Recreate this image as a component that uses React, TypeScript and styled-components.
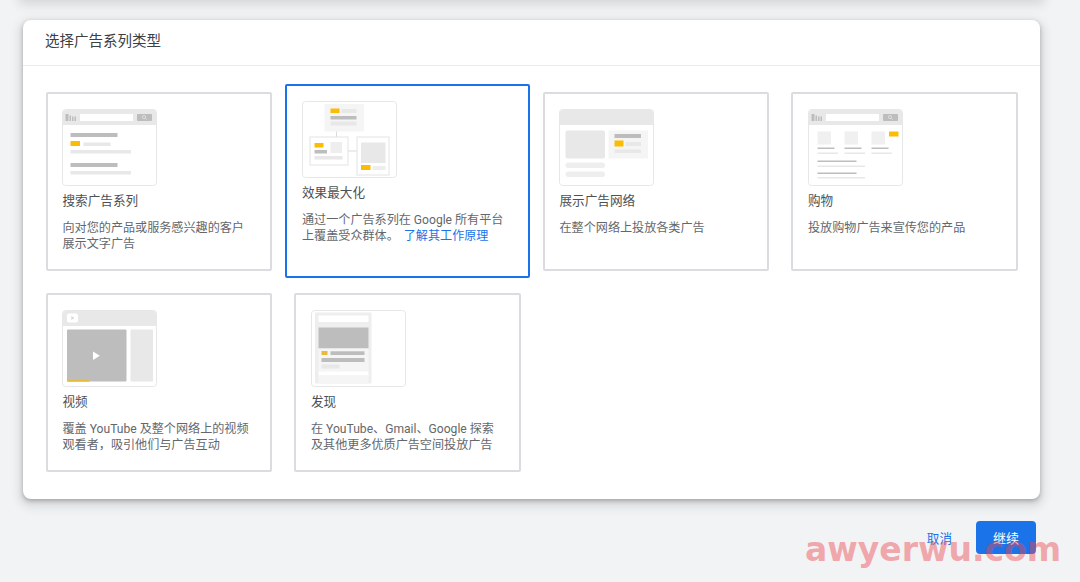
import React from 'react'
import styled, { createGlobalStyle } from 'styled-components'

const GlobalStyle = createGlobalStyle`
  html, body {
    margin: 0;
    height: 100%;
    overflow: hidden;
    background: #f1f3f4;
  }
  body {
    font-family: Roboto, 'Noto Sans CJK SC', sans-serif;
    color: #3c4043;
  }
`

const Page = styled.div`
  position: relative;
  height: 582px;
  padding: 20px 40px 0 23px;
  overflow: hidden;
`

// bottom edge of the panel above, only its shadow is in view
const PrevPanel = styled.div`
  position: absolute;
  top: -44px;
  left: 23px;
  right: 40px;
  height: 40px;
  background: #fff;
  box-shadow: 0 4px 10px 4px rgba(60, 64, 67, 0.16);
`

const Panel = styled.section`
  background: #fff;
  border-radius: 8px;
  box-shadow: 0 2px 4px rgba(60, 64, 67, 0.35), 0 4px 10px 4px rgba(60, 64, 67, 0.13);
`

const PanelHeader = styled.h1`
  margin: 0;
  height: 46px;
  padding: 0 22px 6px;
  box-sizing: border-box;
  display: flex;
  align-items: center;
  font-size: 14.5px;
  font-weight: 400;
  color: #3c4043;
  border-bottom: 1px solid #e8eaed;
`

const CardGrid = styled.div`
  display: grid;
  grid-template-columns: repeat(4, 1fr);
  grid-auto-rows: 179px;
  gap: 22px;
  padding: 26px 22.5px 27px;
`

const Card = styled.div<{ $selected?: boolean }>`
  padding: 15px;
  border: 2px solid ${p => (p.$selected ? '#1a73e8' : '#dadce0')};
  border-radius: 2px;
  background: #fff;
  margin: ${p => (p.$selected ? '-8px -9px -7px' : '0')};
`

const Thumb = styled.svg`
  display: block;
  width: 95px;
  height: 77px;
  margin-left: -0.5px;
`

const CardTitle = styled.div`
  margin-top: 5px;
  font-size: 12.6px;
  line-height: 20px;
  color: #4d5155;
`

const CardText = styled.div`
  margin-top: 9px;
  font-size: 12.1px;
  line-height: 16px;
  color: #63676c;
  white-space: nowrap;
`

const LearnMore = styled.a`
  margin-left: 5px;
  color: #1a73e8;
  text-decoration: none;
`

const Footer = styled.div`
  display: flex;
  justify-content: flex-end;
  align-items: center;
  gap: 24px;
  margin-top: 22px;
  padding-right: 4px;
`

const CancelLink = styled.a`
  font-size: 12.6px;
  color: #1a73e8;
`

const ContinueButton = styled.button`
  width: 60px;
  height: 33px;
  border: 0;
  border-radius: 4px;
  background: #1a73e8;
  color: #fff;
  font-family: inherit;
  font-size: 13px;
`

const Watermark = styled.div`
  position: absolute;
  left: 805px;
  top: 531px;
  font-family: 'DejaVu Sans', sans-serif;
  font-weight: 700;
  font-size: 33px;
  line-height: 38px;
  color: rgba(238, 70, 80, 0.46);
  white-space: nowrap;
  pointer-events: none;
`

const BG = '#e8e8e8'
const LIGHT = '#eeeeee'
const PALE = '#f5f5f5'
const DARK = '#bdbdbd'
const YELLOW = '#fbbc04'

const Bar: React.FC<{ x: number; y: number; x2: number; y2: number; fill: string; r?: number }> = ({
  x,
  y,
  x2,
  y2,
  fill,
  r,
}) => <rect x={x} y={y} width={x2 - x} height={y2 - y} fill={fill} rx={r} />

const Frame: React.FC<{ children: React.ReactNode; label: string }> = ({ children, label }) => (
  <Thumb viewBox='0 0 95 77' role='img' aria-label={label}>
    <rect x='0.5' y='0.5' width='94' height='76' rx='3' fill='#fff' stroke='#e6e7e9' />
    {children}
  </Thumb>
)

const SearchBar: React.FC = () => (
  <>
    <path d='M1 16V3.5A2.5 2.5 0 0 1 3.5 1h88A2.5 2.5 0 0 1 94 3.5V16z' fill={BG} />
    <Bar x={3.5} y={5} x2={6.5} y2={12} fill={DARK} />
    <Bar x={7.5} y={6.5} x2={9} y2={12} fill={DARK} />
    <Bar x={10} y={7.5} x2={11.5} y2={12} fill={DARK} />
    <Bar x={12.5} y={7.5} x2={14} y2={12} fill={DARK} />
    <Bar x={18} y={5} x2={71} y2={12} fill='#fff' />
    <Bar x={75} y={5} x2={90} y2={12} fill={DARK} r={1} />
    <circle cx='82' cy='8' r='1.6' fill='none' stroke='#e8e8e8' strokeWidth='0.7' />
    <path d='M83.2 9.2l1.5 1.5' stroke='#e8e8e8' strokeWidth='0.7' />
  </>
)

const SearchThumb: React.FC = () => (
  <Frame label='搜索广告系列'>
    <SearchBar />
    <Bar x={8.5} y={24} x2={55.5} y2={28} fill={DARK} />
    <Bar x={8.5} y={32} x2={18} y2={37} fill={YELLOW} />
    <Bar x={21.5} y={33.5} x2={48.5} y2={37} fill={BG} />
    <Bar x={8.5} y={41} x2={69} y2={44.5} fill={BG} />
    <Bar x={8.5} y={54} x2={55.5} y2={58} fill={DARK} />
    <Bar x={8.5} y={62} x2={69} y2={65.5} fill={BG} />
  </Frame>
)

const MaxThumb: React.FC = () => (
  <Frame label='效果最大化'>
    <Bar x={22.5} y={3} x2={62} y2={30.5} fill={PALE} />
    <Bar x={28.5} y={7.5} x2={37.5} y2={12} fill={YELLOW} />
    <Bar x={39.5} y={8} x2={54.5} y2={12} fill={BG} />
    <Bar x={28.5} y={15} x2={54.5} y2={18.5} fill={DARK} />
    <Bar x={28.5} y={20.5} x2={54.5} y2={24.5} fill={BG} />
    <Bar x={34} y={30.5} x2={35} y2={36} fill='#dcdcdc' />
    <rect x='8' y='36' width='38' height='28' fill='#fff' stroke='#e4e4e4' />
    <Bar x={12.5} y={42} x2={21.5} y2={46.5} fill={YELLOW} />
    <Bar x={12.5} y={49} x2={25} y2={52.5} fill={DARK} />
    <Bar x={28.5} y={41} x2={40} y2={52} fill={LIGHT} />
    <Bar x={12.5} y={55} x2={40.5} y2={58.5} fill={BG} />
    <Bar x={46} y={49.5} x2={55} y2={50.5} fill='#dcdcdc' />
    <rect x='55' y='36' width='32' height='38' fill='#fff' stroke='#e4e4e4' />
    <Bar x={59} y={41.5} x2={83.5} y2={62} fill={BG} />
    <Bar x={59} y={64} x2={68.5} y2={69} fill={YELLOW} />
    <Bar x={70.5} y={65} x2={83.5} y2={69} fill={LIGHT} />
  </Frame>
)

const DisplayThumb: React.FC = () => (
  <Frame label='展示广告网络'>
    <path d='M1 16V3.5A2.5 2.5 0 0 1 3.5 1h88A2.5 2.5 0 0 1 94 3.5V16z' fill={BG} />
    <Bar x={6.5} y={21.5} x2={46} y2={49.5} fill={BG} r={2} />
    <Bar x={49.5} y={21.5} x2={89} y2={49.5} fill={PALE} />
    <Bar x={55.5} y={25} x2={82} y2={29} fill={DARK} />
    <Bar x={55.5} y={31.5} x2={64.5} y2={37.5} fill={YELLOW} />
    <Bar x={66.5} y={33} x2={82} y2={37} fill={BG} />
    <Bar x={55.5} y={40.5} x2={82} y2={44} fill={BG} />
    <Bar x={6.5} y={53.5} x2={46} y2={59} fill={LIGHT} r={2.7} />
    <Bar x={6.5} y={62.5} x2={46} y2={68} fill={LIGHT} r={2.7} />
  </Frame>
)

const ShoppingThumb: React.FC = () => (
  <Frame label='购物'>
    <SearchBar />
    {[9.5, 36.5, 63.5].map(x => (
      <React.Fragment key={x}>
        <Bar x={x} y={22.5} x2={x + 13.5} y2={35.5} fill='#f0f0f0' />
        <Bar x={x} y={38.5} x2={x + 17} y2={40} fill={DARK} />
        <Bar x={x} y={43.5} x2={x + 20.5} y2={45} fill={BG} />
      </React.Fragment>
    ))}
    <Bar x={81} y={22.5} x2={90.5} y2={27.5} fill={YELLOW} />
    <Bar x={9.5} y={51.5} x2={48.5} y2={53} fill={DARK} />
    <Bar x={9.5} y={56.5} x2={57} y2={58} fill={BG} />
    <Bar x={9.5} y={63.5} x2={48.5} y2={65} fill={DARK} />
    <Bar x={9.5} y={68} x2={57} y2={69.5} fill={BG} />
  </Frame>
)

const VideoThumb: React.FC = () => (
  <Frame label='视频'>
    <path d='M1 16V3.5A2.5 2.5 0 0 1 3.5 1h88A2.5 2.5 0 0 1 94 3.5V16z' fill={BG} />
    <Bar x={5} y={3.5} x2={16} y2={12.5} fill='#fff' r={2} />
    <path d='M9.3 6l3.2 2-3.2 2z' fill='#d8d8d8' />
    <Bar x={5} y={19.5} x2={64.5} y2={71.5} fill={DARK} r={1} />
    <Bar x={68.5} y={19.5} x2={91} y2={71.5} fill={BG} r={1} />
    <Bar x={5} y={70.3} x2={27.5} y2={71.7} fill={YELLOW} />
    <path d='M31 41.5l6.8 4.3-6.8 4.2z' fill='#fff' />
  </Frame>
)

const DiscoverThumb: React.FC = () => (
  <Frame label='发现'>
    <Bar x={4} y={2.5} x2={60.5} y2={73.5} fill={LIGHT} r={1} />
    <Bar x={7.5} y={5.5} x2={57.5} y2={12} fill='#fff' />
    <Bar x={7.5} y={17.5} x2={57.5} y2={38.5} fill={DARK} />
    <Bar x={7.5} y={38.5} x2={57.5} y2={61.5} fill={PALE} />
    <Bar x={10.5} y={41} x2={16.5} y2={45} fill='#e8b93b' />
    <Bar x={19.5} y={41.3} x2={53.5} y2={45} fill={DARK} />
    <Bar x={10.5} y={48} x2={53.5} y2={52} fill={DARK} />
    <Bar x={10.5} y={54.5} x2={28.5} y2={58.5} fill={BG} />
    <Bar x={7.5} y={61.5} x2={57.5} y2={65.5} fill='#fff' />
    <Bar x={7.5} y={65.5} x2={57.5} y2={73.5} fill={PALE} />
  </Frame>
)

const App: React.FC = () => (
  <Page>
    <GlobalStyle />
    <PrevPanel />
    <Panel>
      <PanelHeader>选择广告系列类型</PanelHeader>
      <CardGrid>
        <Card>
          <SearchThumb />
          <CardTitle>搜索广告系列</CardTitle>
          <CardText>
            向对您的产品或服务感兴趣的客户
            <br />
            展示文字广告
          </CardText>
        </Card>
        <Card $selected>
          <MaxThumb />
          <CardTitle>效果最大化</CardTitle>
          <CardText>
            通过一个广告系列在 Google 所有平台
            <br />
            上覆盖受众群体。
            <LearnMore href='#learn'>了解其工作原理</LearnMore>
          </CardText>
        </Card>
        <Card>
          <DisplayThumb />
          <CardTitle>展示广告网络</CardTitle>
          <CardText>在整个网络上投放各类广告</CardText>
        </Card>
        <Card>
          <ShoppingThumb />
          <CardTitle>购物</CardTitle>
          <CardText>投放购物广告来宣传您的产品</CardText>
        </Card>
        <Card>
          <VideoThumb />
          <CardTitle>视频</CardTitle>
          <CardText>
            覆盖 YouTube 及整个网络上的视频
            <br />
            观看者，吸引他们与广告互动
          </CardText>
        </Card>
        <Card>
          <DiscoverThumb />
          <CardTitle>发现</CardTitle>
          <CardText>
            在 YouTube、Gmail、Google 探索
            <br />
            及其他更多优质广告空间投放广告
          </CardText>
        </Card>
      </CardGrid>
    </Panel>
    <Footer>
      <CancelLink>取消</CancelLink>
      <ContinueButton>继续</ContinueButton>
    </Footer>
    <Watermark>awyerwu.com</Watermark>
  </Page>
)

export default App
